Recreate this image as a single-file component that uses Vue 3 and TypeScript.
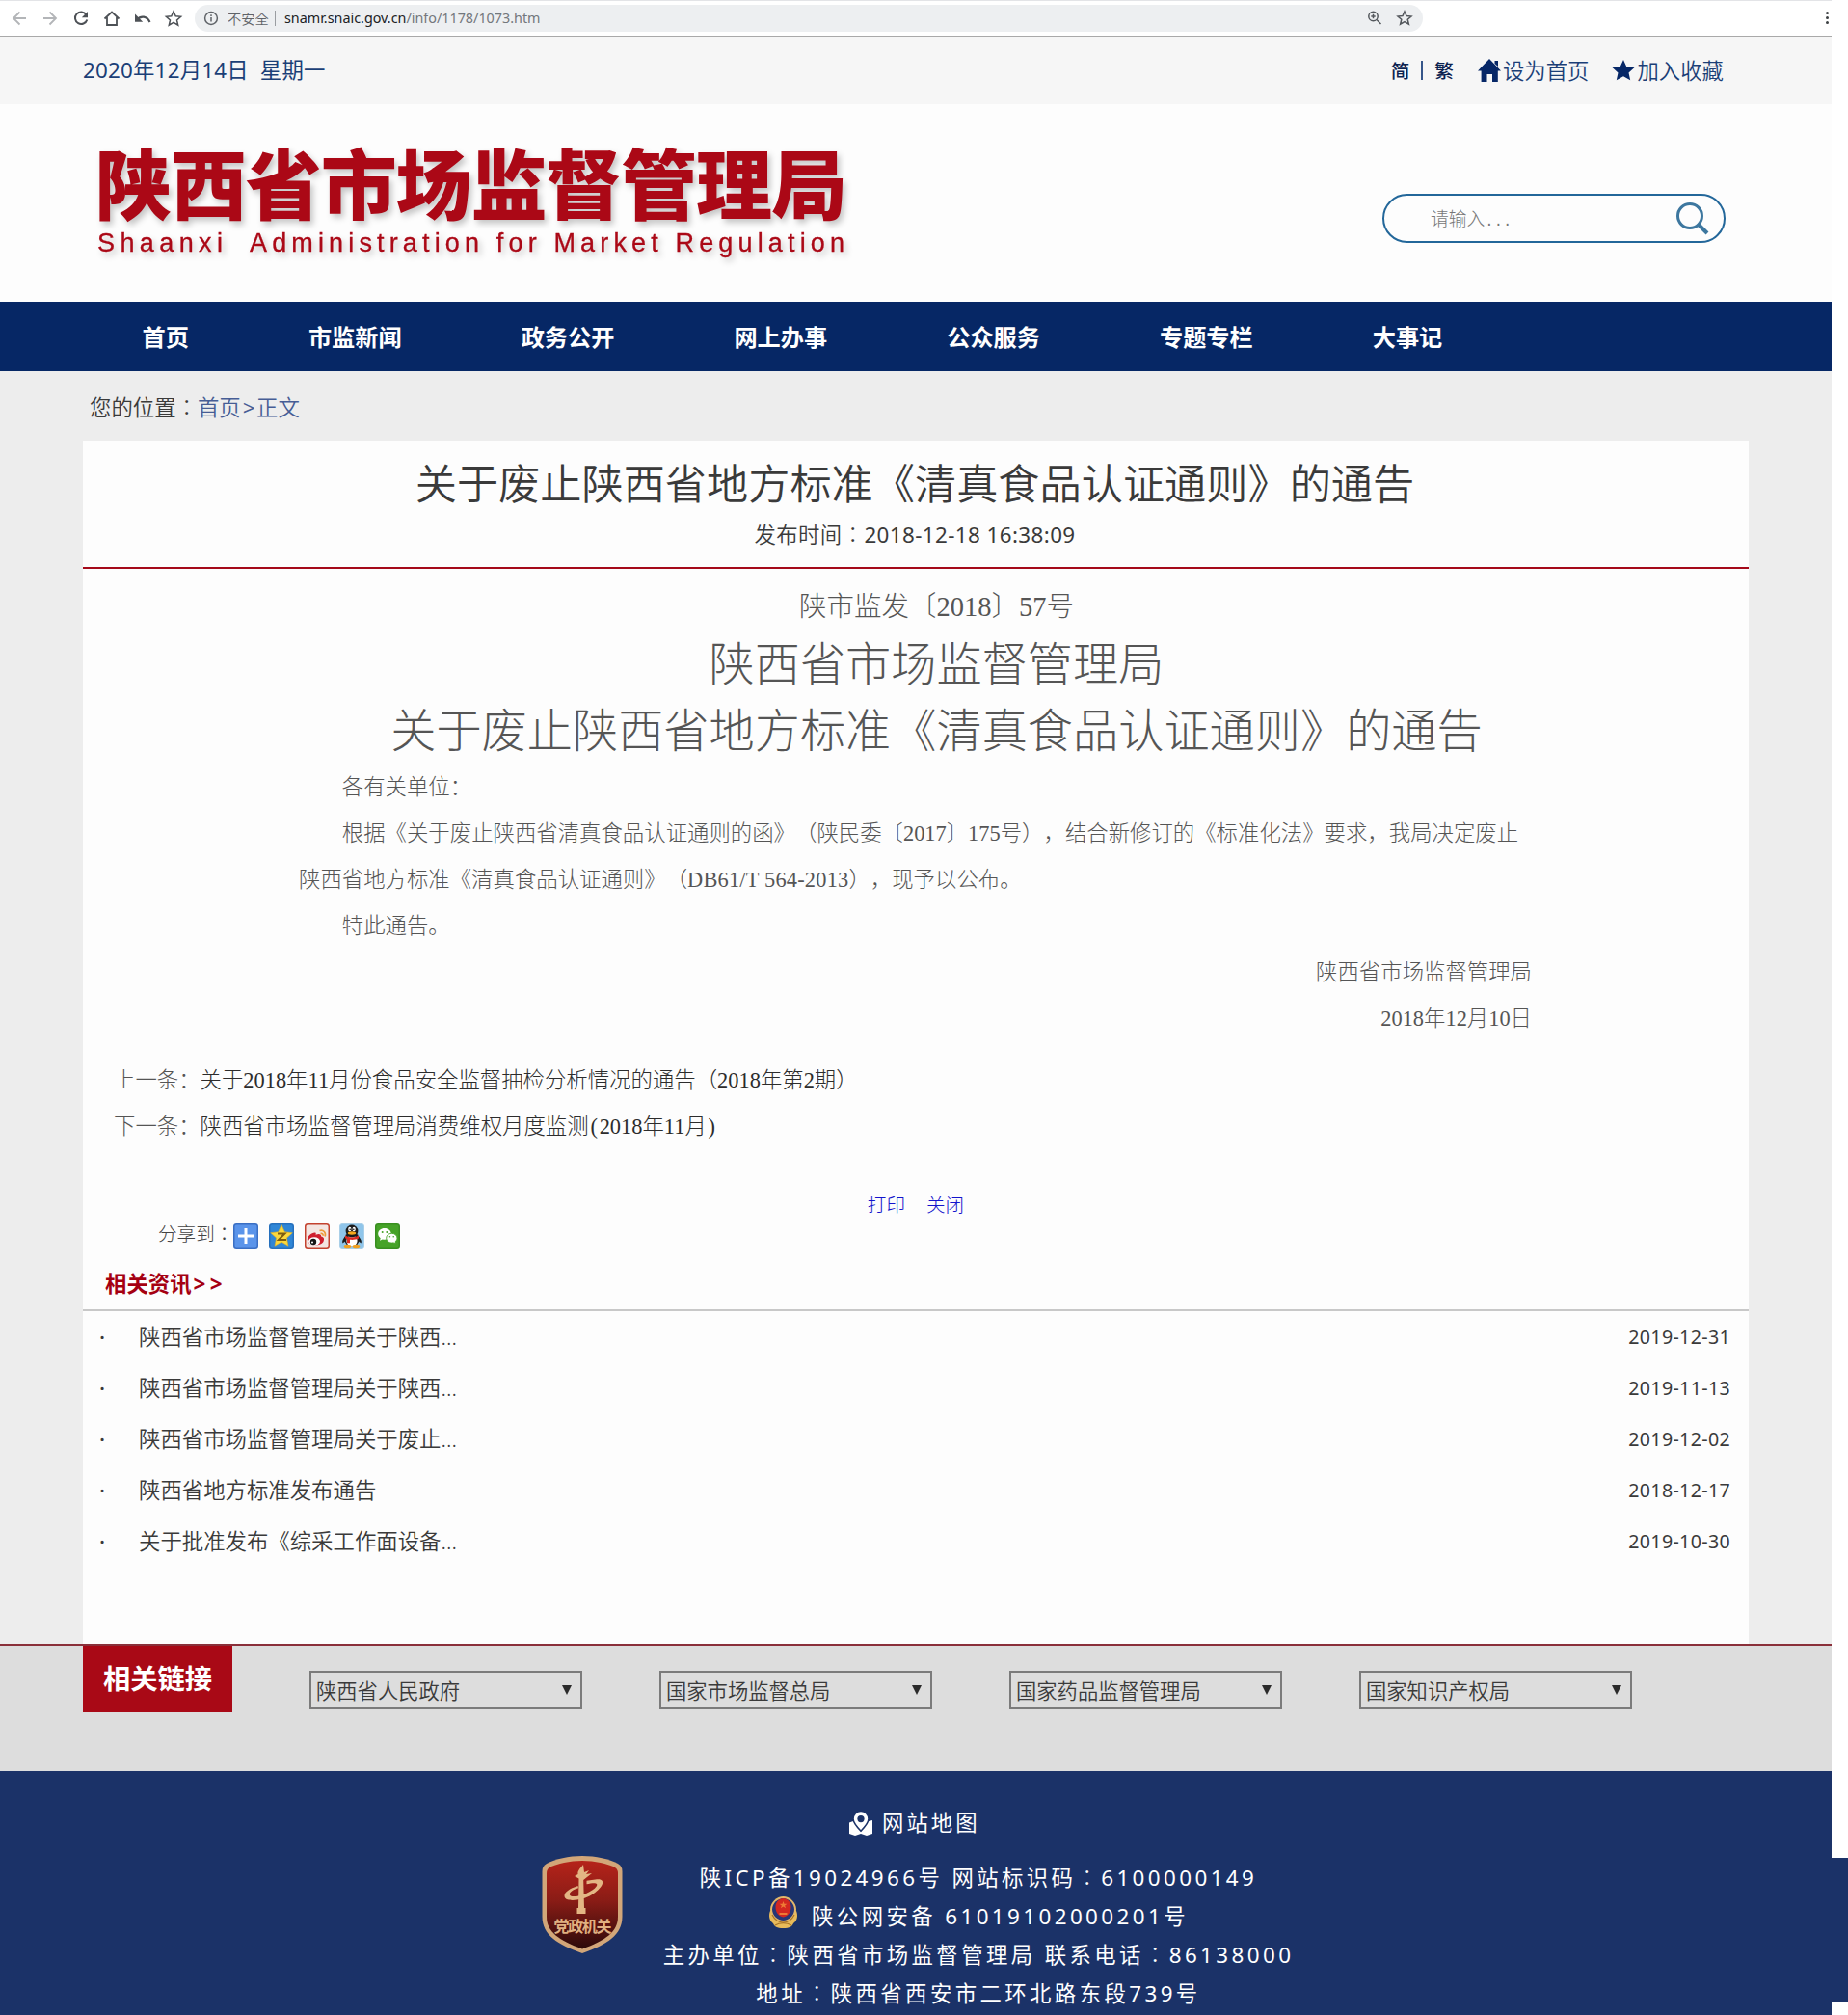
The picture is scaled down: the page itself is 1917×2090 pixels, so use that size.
<script setup lang="ts">
interface RelatedItem {
  title: string
  date: string
}

const navItems: string[] = ['首页', '市监新闻', '政务公开', '网上办事', '公众服务', '专题专栏', '大事记']

const related: RelatedItem[] = [
  { title: '陕西省市场监督管理局关于陕西...', date: '2019-12-31' },
  { title: '陕西省市场监督管理局关于陕西...', date: '2019-11-13' },
  { title: '陕西省市场监督管理局关于废止...', date: '2019-12-02' },
  { title: '陕西省地方标准发布通告', date: '2018-12-17' },
  { title: '关于批准发布《综采工作面设备...', date: '2019-10-30' },
]

const selects: string[] = ['陕西省人民政府', '国家市场监督总局', '国家药品监督管理局', '国家知识产权局']
</script>

<template>
  <div class="screen">
    <div class="chrome">
      <svg class="tools" width="200" height="36" viewBox="0 0 200 36" fill="none" stroke-width="1.8">
        <g stroke="#b3b5b8">
          <path d="M27 19H14.500M20.500 12.500L14 19l6.500 6.500" />
          <path d="M45 19h12.500M51.500 12.500L58 19l-6.500 6.500" />
        </g>
        <g stroke="#4d5156">
          <path d="M89.500 15.200A6.300 6.300 0 1 0 90.300 20.500" stroke-width="2" />
          <path d="M91 12v6.200h-6.200z" fill="#4d5156" stroke="none" />
          <path d="M108.500 19.500L116 12.500l7.500 7M111 18v8h10v-8" />
          <path d="M142 20.500c4-4.500 10.500-4 13.500 2.500" stroke-width="2.200" />
          <path d="M140 14.500v8.200h8.200z" fill="#4d5156" stroke="none" />
          <path d="M180 11.800l2.200 5 5.400.5-4.100 3.600 1.200 5.300-4.700-2.800-4.700 2.800 1.200-5.300-4.100-3.600 5.400-.5z" stroke-width="1.500" />
        </g>
      </svg>
      <div class="omnibox">
        <svg class="info-ico" width="16" height="16" viewBox="0 0 16 16" fill="none" stroke="#5f6368" stroke-width="1.500">
          <circle cx="8" cy="8" r="6.400" />
          <path d="M8 7v4.500M8 4.300v1.600" />
        </svg>
        <span class="unsafe">不安全</span>
        <span class="sep"></span>
        <span class="url">snamr.snaic.gov.cn<em>/info/1178/1073.htm</em></span>
        <svg class="omni-right" width="54" height="20" viewBox="0 0 54 20" fill="none" stroke="#54585d" stroke-width="1.500">
          <circle cx="8.500" cy="8" r="4.700" />
          <path d="M12 11.500l4.500 4.500M8.500 5.800v4.400M6.300 8h4.400" />
          <path d="M41 3l2 4.600 5 .4-3.800 3.300 1.200 4.900L41 13.600l-4.400 2.600 1.200-4.900L34 8l5-.4z" />
        </svg>
      </div>
      <div class="dots"><i></i><i></i><i></i></div>
    </div>

    <div class="topbar">
      <span class="date">2020年12月14日&nbsp; 星期一</span>
      <div class="top-links">
        <span class="lang">简</span>
        <span class="bar"></span>
        <span class="lang">繁</span>
        <a class="home-link">
          <svg width="24" height="24" viewBox="0 0 24 24" fill="#062767">
            <path d="M12 0L24 12.500H20.800V24H15V16H9.500V24H3.600V12.500H0z" />
            <path d="M17.500 2h3.500v6l-3.500-3z" />
          </svg>
          <span>设为首页</span>
        </a>
        <a class="fav-link">
          <svg width="24" height="24" viewBox="0 0 24 24" fill="#062767">
            <path d="M12 1l3.300 7.200 8.200.8-6 5.400 1.700 7.800L12 18.300l-7.200 3.900 1.700-7.800-6-5.400 8.200-.8z" />
          </svg>
          <span>加入收藏</span>
        </a>
      </div>
    </div>

    <header class="masthead">
      <svg class="logo" width="800" height="140" viewBox="0 0 800 140">
        <text class="logo-cn" x="13" y="87" textLength="780" lengthAdjust="spacing">陕西省市场监督管理局</text>
        <text class="logo-en" x="15" y="126" textLength="130" lengthAdjust="spacing">Shaanxi</text>
        <text class="logo-en" x="173" y="126" textLength="617" lengthAdjust="spacing">Administration for Market Regulation</text>
      </svg>
      <div class="search">
        <span>请输入<b>...</b></span>
        <svg width="38" height="38" viewBox="0 0 38 38" fill="none" stroke="#3d779f">
          <circle cx="17" cy="16" r="12.500" stroke-width="3" />
          <path d="M26 25l9 9" stroke-width="4" />
        </svg>
      </div>
    </header>

    <nav class="nav">
      <a v-for="item in navItems" :key="item">{{ item }}</a>
    </nav>

    <main class="main">
      <div class="crumb">您的位置<span class="colon">：</span><a>首页<i>&gt;</i>正文</a></div>
      <section class="panel">
        <h1>关于废止陕西省地方标准《清真食品认证通则》的通告</h1>
        <p class="pub">发布时间<span class="colon">：</span><time>2018-12-18 16:38:09</time></p>
        <article class="article">
          <p class="doc-no">陕市监发〔2018〕57号</p>
          <p class="doc-title first">陕西省市场监督管理局</p>
          <p class="doc-title second">关于废止陕西省地方标准《清真食品认证通则》的通告</p>
          <p class="indent">各有关单位：</p>
          <p class="indent">根据《关于废止陕西省清真食品认证通则的函》（陕民委〔2017〕175号），结合新修订的《标准化法》要求，我局决定废止</p>
          <p>陕西省地方标准《清真食品认证通则》（<span class="code">DB61/T 564-2013</span>），现予以公布。</p>
          <p class="indent">特此通告。</p>
          <p class="sign">陕西省市场监督管理局</p>
          <p class="sign">2018年12月10日</p>
        </article>
        <div class="siblings">
          <p>上一条：<a>关于2018年11月份食品安全监督抽检分析情况的通告（2018年第2期）</a></p>
          <p>下一条：<a>陕西省市场监督管理局消费维权月度监测<i>(</i>2018年11月<i>)</i></a></p>
        </div>
        <div class="actions"><a>打印</a><a>关闭</a></div>
        <div class="share">
          <span class="share-label">分享到<span class="colon">：</span></span>
          <svg width="26" height="26" viewBox="0 0 26 26">
            <rect x=".75" y=".75" width="24.500" height="24.500" rx="2.500" fill="#5a94ea" stroke="#3a6fc4" stroke-width="1.500" />
            <path d="M13 5v16M5 13h16" stroke="#fff" stroke-width="3" />
          </svg>
          <svg width="26" height="26" viewBox="0 0 26 26">
            <rect x=".75" y=".75" width="24.500" height="24.500" rx="2.500" fill="#2f86d6" stroke="#2670bd" stroke-width="1.500" />
            <path d="M13 1.500l3.300 7.300 8 .9-5.900 5.400 1.600 8.100-7-4-7 4 1.600-8.100L1.700 9.700l8-.9z" fill="#fbd83c" stroke="#e3ae22" stroke-width=".6" />
            <path d="M9 10.500h7.500L10 17h8" fill="none" stroke="#7c5c10" stroke-width="2" />
          </svg>
          <svg width="26" height="26" viewBox="0 0 26 26">
            <rect x=".75" y=".75" width="24.500" height="24.500" rx="2.500" fill="#f3e6e2" stroke="#c3422f" stroke-width="1.500" />
            <path d="M3 18c-1-5 5-9 8-8.500 1 .3.800 1.500.5 2.200 3-1.400 6-1 5.600 1.800 3 .8 3.500 2.500 2.500 5-2 5-15 6-16.600-.5z" fill="#cf1f2e" />
            <ellipse cx="10" cy="18.500" rx="6" ry="4.300" fill="#fff" />
            <circle cx="9" cy="19" r="3.200" fill="#161616" />
            <circle cx="8" cy="19.500" r="1" fill="#fff" />
            <path d="M15.500 7.500c4-1.300 7 2 5.600 6M16.500 10.500c1.800-.5 3 .7 2.500 2.300" fill="none" stroke="#ee9a3a" stroke-width="1.700" />
          </svg>
          <svg width="26" height="26" viewBox="0 0 26 26">
            <rect x=".5" y=".5" width="25" height="25" rx="2.500" fill="#8fc5ea" stroke="#a9cfe8" />
            <path d="M6.500 13C3.500 16 2.500 19 3.500 20.500L6.500 18zM19.500 13c3 3 4 6 3 7.500L19.500 18z" fill="#1c1c1c" />
            <ellipse cx="13" cy="16.500" rx="7.800" ry="7.300" fill="#1c1c1c" />
            <ellipse cx="13" cy="18" rx="5.600" ry="5.700" fill="#fff" />
            <ellipse cx="13" cy="8" rx="6.400" ry="6.400" fill="#1c1c1c" />
            <ellipse cx="10.800" cy="6" rx="1.600" ry="2.200" fill="#fff" />
            <ellipse cx="15.200" cy="6" rx="1.600" ry="2.200" fill="#fff" />
            <circle cx="11.200" cy="6.300" r=".8" fill="#111" />
            <circle cx="14.800" cy="6.300" r=".8" fill="#111" />
            <ellipse cx="13" cy="10" rx="4.200" ry="1.700" fill="#f5a81c" />
            <path d="M6 12.500c4 2.500 10 2.500 14 0v3c-3 1.300-6 1.600-9 1.300v3.400H8v-4l-2-.9z" fill="#dc2a22" />
            <ellipse cx="8.500" cy="23.500" rx="3.800" ry="1.800" fill="#f0a020" />
            <ellipse cx="17.500" cy="23.500" rx="3.800" ry="1.800" fill="#f0a020" />
          </svg>
          <svg width="26" height="26" viewBox="0 0 26 26">
            <rect x=".75" y=".75" width="24.500" height="24.500" rx="2.500" fill="#46a328" stroke="#398f20" stroke-width="1.500" />
            <path d="M10 5c-4 0-6.800 2.600-6.800 5.800 0 1.900 1 3.400 2.500 4.500L5 17.800l2.800-1.400c.8.200 1.500.3 2.300.3 3.700 0 6.700-2.600 6.700-5.900C16.800 7.600 13.800 5 10 5z" fill="#fff" />
            <path d="M17.300 10.300c3.300 0 5.700 2.200 5.700 4.900 0 1.500-.8 2.800-2 3.700l.6 2.200-2.400-1.200c-.6.100-1.200.2-1.900.2-3.200 0-5.600-2.200-5.600-4.900s2.400-4.900 5.600-4.900z" fill="#fff" stroke="#46a328" stroke-width=".9" />
            <g fill="#46a328">
              <circle cx="7.700" cy="9" r="1" />
              <circle cx="12.300" cy="9" r="1" />
              <circle cx="15.400" cy="13.800" r=".8" />
              <circle cx="19.200" cy="13.800" r=".8" />
            </g>
          </svg>
        </div>
        <h2>相关资讯<i>&gt;&gt;</i></h2>
        <ul class="related">
          <li v-for="item in related" :key="item.date">
            <span class="dot">·</span>
            <a>{{ item.title }}</a>
            <time>{{ item.date }}</time>
          </li>
        </ul>
      </section>
    </main>

    <section class="links">
      <div class="links-title">相关链接</div>
      <div v-for="name in selects" :key="name" class="select">
        <span>{{ name }}</span>
        <svg width="10" height="10" viewBox="0 0 10 10"><path d="M0 0h10L5 10z" fill="#2b2b2b" /></svg>
      </div>
    </section>

    <div class="foot-wrap">
      <footer class="footer">
        <div class="sitemap">
          <svg width="24" height="25" viewBox="0 0 24 25">
            <path d="M0 11.500l4-1.500 8 10.500L20 10l4-1v14l-6 2-6-2-6 2-6-2z" fill="#fff" />
            <path d="M12 -.5a8 8 0 0 1 8 8c0 4-5 9.600-8 12.700C9 17.100 4 11.500 4 7.500a8 8 0 0 1 8-8z" fill="#fff" stroke="#1b3268" stroke-width="1.600" />
            <circle cx="12" cy="7.600" r="3.600" fill="#1b3268" />
          </svg>
          <span>网站地图</span>
        </div>
        <div class="foot-row">
          <svg class="badge" width="84" height="101" viewBox="0 0 84 101">
            <defs>
              <linearGradient id="shield" x1="0" y1="0" x2="0" y2="1">
                <stop offset="0" stop-color="#b5231a" />
                <stop offset=".45" stop-color="#8a1c16" />
                <stop offset="1" stop-color="#2c0a0a" />
              </linearGradient>
            </defs>
            <path d="M42 0c14 0 28 3 37 8 3 2 4.500 4 4.500 8v47c0 19-16 29-41.500 38C16.500 92 .5 82 .5 63V16c0-4 1.500-6 4.500-8C14 3 28 0 42 0z" fill="#d2a679" />
            <path d="M42 5c13 0 26 3 34 7 2 1.500 3 3 3 6v45c0 16-13 24.500-37 33.500C18 87.500 5 79 5 63V18c0-3 1-4.500 3-6 8-4 21-7 34-7z" fill="url(#shield)" />
            <g fill="#e3b684">
              <path d="M43 9c-3 4-6 6-5.500 10l-3.500 2 4.500 2.500L38 54h-1.500v6h9v-6H44l-.8-29 8.800-7-6 1 3-4-5 2z" />
              <path d="M37.500 31c-9 3-14 6.500-14 10.500 0 7 18 5 28-1 12-7 17-18 4-16l-9 1.200v3.500c7-1.500 13-2 10 2.500-4 6-21 12-26 10-4-2-.5-6 7.500-8.500z" />
            </g>
            <text class="badge-text" x="12.500" y="79" textLength="60">党政机关</text>
          </svg>
          <div class="foot-lines">
            <p>陕ICP备19024966号 网站标识码<span class="colon">：</span>6100000149</p>
            <p class="police">
              <svg width="31" height="33" viewBox="0 0 31 33">
                <path d="M2 15h27c2 5 1 10-3 13-1 3-4 5-10.500 5S6 31 5 28c-4-3-5-8-3-13z" fill="#e8bb5a" />
                <path d="M15.500 0C22 0 29 6 29 13.500S23 28 15.500 28 2 21 2 13.500 9 0 15.500 0z" fill="#e4b869" />
                <path d="M15.500 2C21 2 27 7 27 13.500 27 20 21 25 15.500 25S4 20 4 13.500C4 7 10 2 15.500 2z" fill="#283675" />
                <path d="M15.500 2c4 0 8 3.500 8 9s-3 9.500-8 10.500c-5-1-8-5-8-10.500s4-9 8-9z" fill="#d32720" />
                <path d="M15.500 5l1 2.700h3l-2.400 1.800 1 2.800-2.600-1.700-2.600 1.700 1-2.800-2.400-1.800h3zM11.500 17h8v2h-8z" fill="#ee7a35" />
                <path d="M4 19c3 6 8 8 11.500 8S24 25 27 19M7 30c5-3 12-3 17 0" fill="none" stroke="#a87526" stroke-width="1.200" />
              </svg>
              <span>陕公网安备 61019102000201号</span>
            </p>
            <p>主办单位<span class="colon">：</span>陕西省市场监督管理局 联系电话<span class="colon">：</span>86138000</p>
            <p>地址<span class="colon">：</span>陕西省西安市二环北路东段739号</p>
          </div>
        </div>
      </footer>
      <div class="foot-edge"></div>
    </div>
  </div>
</template>

<style>
html,
body {
  margin: 0;
  background: #fff;
}
</style>

<style scoped>
.screen {
  width: 1917px;
  height: 2090px;
  overflow: hidden;
  background: #fff;
  font-family: 'Noto Sans', 'Noto Sans CJK SC', sans-serif;
  font-size: 22.4px;
  font-weight: 350;
  color: #3a3a3a;
  white-space: nowrap;
  text-spacing-trim: space-all;
}
p,
h1,
h2,
ul {
  margin: 0;
  padding: 0;
}
/* The traditional face centres the full-width colon in its cell. */
.colon {
  font-family: 'Noto Sans CJK TC', sans-serif;
  font-weight: 300;
  line-height: 1px;
}
.chrome,
.topbar,
.masthead,
.nav,
.main,
.links {
  width: 1900px;
  box-sizing: border-box;
}

.chrome {
  height: 38px;
  display: flex;
  align-items: flex-start;
  border-top: 1px solid #e3e4e7;
  border-bottom: 1px solid #a9a9a9;
  background: #fff;
}
.tools {
  margin-top: -1px;
  flex: none;
}
.omnibox {
  margin: 4px 0 0 2px;
  width: 1274px;
  height: 28px;
  box-sizing: border-box;
  border-radius: 14px;
  background: #edeff1;
  display: flex;
  align-items: center;
  padding-left: 9px;
}
.info-ico {
  flex: none;
}
.unsafe {
  font-size: 14.2px;
  color: #5f6368;
  margin: -1px 0 0 9px;
  width: 43px;
}
.sep {
  width: 1px;
  height: 16px;
  background: #9a9da1;
  margin: 0 9px 0 6px;
}
.url {
  font-size: 14.350px;
  font-weight: 400;
  color: #202124;
  margin-top: -1px;
}
.url em {
  font-style: normal;
  color: #73777c;
}
.omni-right {
  margin-left: auto;
  margin-right: 6px;
}
.dots {
  margin: 11px 3px 0 auto;
  display: flex;
  flex-direction: column;
  gap: 2px;
}
.dots i {
  width: 3px;
  height: 3px;
  border-radius: 50%;
  background: #3c4043;
}

.topbar {
  height: 70px;
  background: #f6f6f6;
  display: flex;
  justify-content: space-between;
  align-items: center;
  padding: 0 110px 0 86px;
  color: #1b3f77;
}
.date {
  font-weight: 400;
  letter-spacing: 0.200px;
  margin-top: -3px;
}
.top-links {
  display: flex;
  align-items: center;
}
.lang {
  font-family: 'Noto Sans CJK SC', sans-serif;
  font-size: 19.6px;
  font-weight: 500;
  line-height: 28px;
  margin-top: -1px;
  color: #0b2250;
}
.bar {
  width: 2px;
  height: 20px;
  background: #36568a;
  margin: 0 12px;
}
.home-link,
.fav-link {
  display: flex;
  align-items: center;
}
.home-link {
  margin: 0 24px 0 25px;
}
.home-link span,
.fav-link span {
  margin: -2px 0 0 2px;
}
.fav-link span {
  margin-right: 2px;
}

.masthead {
  height: 205px;
  background: #fdfdfd;
  display: flex;
  justify-content: space-between;
  padding: 27px 110px 0 86px;
}
.logo {
  overflow: visible;
  fill: #ab0816;
  filter: drop-shadow(3px 4px 3px rgba(0, 0, 0, 0.22));
}
.logo-cn {
  font: 900 79px 'Noto Sans CJK SC', sans-serif;
}
.logo-en {
  font: 27px 'Liberation Sans', sans-serif;
  stroke: #ab0816;
  stroke-width: 0.3px;
}
.search {
  margin-top: 66px;
  width: 356px;
  height: 51px;
  box-sizing: border-box;
  border: 2px solid #23679a;
  border-radius: 26px;
  display: flex;
  align-items: center;
  justify-content: space-between;
  padding: 0 14px 0 48px;
  font-size: 18.800px;
  font-weight: 300;
  color: #777;
}
.search span {
  margin-top: -2px;
}
.search b {
  font-family: 'Liberation Mono', monospace;
  font-size: 15.500px;
  font-weight: 400;
}

.nav {
  height: 72px;
  background: #062765;
  display: flex;
  align-items: center;
  gap: 124px;
  padding-left: 147.500px;
  font-size: 24.200px;
  font-weight: 700;
  color: #fff;
}
.nav a {
  line-height: 72px;
  margin-top: 2px;
}

.main {
  height: 1320px;
  background: #ededed;
  padding: 0 86px;
}
.crumb {
  height: 72px;
  line-height: 75px;
  padding-left: 7px;
}
.crumb a {
  color: #465d95;
}
.crumb i {
  font-style: normal;
  font-weight: 400;
  letter-spacing: 1.500px;
  margin-left: 2px;
}
.panel {
  height: 1248px;
  background: #fdfdfd;
  box-sizing: border-box;
}
.panel h1 {
  font-size: 43.200px;
  font-weight: 350;
  line-height: 60px;
  padding-top: 15px;
  text-align: center;
  text-indent: -2px;
}
.pub {
  text-align: center;
  line-height: 32px;
  letter-spacing: 0.400px;
  padding: 7px 2px 17px 0;
  border-bottom: 2px solid #a50a1a;
}
.pub time {
  font-weight: 400;
}
.article {
  font-family: 'Liberation Serif', 'Noto Sans CJK SC', serif;
  font-weight: 300;
  width: 1279px;
  margin-left: 224px;
  padding-top: 15px;
  color: #555;
}
.article p {
  line-height: 48px;
}
.article .doc-no {
  font-size: 28.500px;
  line-height: 49px;
  text-align: center;
  text-indent: 44px;
}
.article .doc-title {
  font-size: 47.200px;
  line-height: 69px;
  text-align: center;
  text-indent: 44px;
}
.article .first {
  padding-top: 2px;
}
.article .second {
  line-height: 68px;
}
.article .indent {
  text-indent: 2em;
}
.article .sign {
  text-align: right;
}
.code {
  letter-spacing: 0.200px;
}
.siblings {
  font-family: 'Liberation Serif', 'Noto Sans CJK SC', serif;
  font-weight: 300;
  padding: 16px 0 0 32px;
  color: #555;
}
.siblings p {
  line-height: 48px;
}
.siblings a {
  color: #2c2c2c;
}
.siblings i {
  font-style: normal;
  padding: 0 1.800px;
}
.actions {
  margin-top: 43px;
  display: flex;
  justify-content: center;
  gap: 22px;
  font-size: 19.600px;
  line-height: 28px;
  font-weight: 300;
}
.actions a {
  color: #1414cc;
}
.share {
  height: 26px;
  margin-top: 5px;
  padding-left: 78px;
  display: flex;
  gap: 10.800px;
  font-size: 19.600px;
  font-weight: 300;
  color: #444;
}
.share-label {
  line-height: 21px;
  width: 78px;
  margin-right: -10.800px;
}
.panel h2 {
  margin-top: 20px;
  height: 43px;
  line-height: 34px;
  padding-left: 23px;
  font-size: 22.400px;
  font-weight: 700;
  color: #a50012;
  border-bottom: 2px solid #c8c8c8;
}
.panel h2 i {
  font-style: normal;
  letter-spacing: 4.500px;
  margin-left: 2px;
}
.related {
  list-style: none;
}
.related li {
  height: 53px;
  line-height: 54px;
  display: flex;
  padding: 0 19px 0 17px;
}
.dot {
  width: 41px;
  font-weight: 500;
}
.related time {
  margin-left: auto;
  line-height: 53px;
  font-size: 19.600px;
  font-weight: 400;
  letter-spacing: 0.350px;
}

.links {
  height: 132px;
  background: #ddd;
  border-top: 2px solid #8a303a;
  padding-left: 86px;
  display: flex;
  align-items: flex-start;
}
.links-title {
  width: 155px;
  height: 69px;
  line-height: 69px;
  background: #a90916;
  color: #fff;
  font-size: 28.300px;
  font-weight: 700;
  text-align: center;
}
.select {
  margin: 26px 0 0 80px;
  width: 283px;
  height: 40px;
  box-sizing: border-box;
  border: 2px solid #7b7b7b;
  display: flex;
  align-items: center;
  justify-content: space-between;
  padding: 0 9px 0 5px;
  font-size: 21.300px;
  line-height: 40px;
}
.select span {
  margin-top: 2px;
}
.select svg {
  margin-bottom: 1px;
}

.foot-wrap {
  display: flex;
  align-items: flex-start;
}
.footer {
  width: 1900px;
  height: 253px;
  background: #1b3268;
  color: #fff;
  font-weight: 400;
  letter-spacing: 3px;
}
.foot-edge {
  margin-top: 90px;
  width: 17px;
  height: 150px;
  background: #1b3268;
}
.sitemap {
  display: flex;
  align-items: center;
  height: 54px;
  padding: 27px 0 0 881px;
}
.sitemap svg {
  margin-top: 1px;
}
.sitemap span {
  margin: -4px 0 0 10px;
}
.footer p {
  line-height: 40px;
  text-align: center;
  letter-spacing: 3.400px;
}
.foot-row {
  display: flex;
  align-items: flex-start;
  margin-top: 7px;
  padding-left: 562px;
}
.foot-lines {
  width: 660px;
  margin: 3px 0 0 39px;
}
.badge-text {
  font: 700 16px 'Noto Sans CJK SC', sans-serif;
  fill: #e0b081;
  letter-spacing: 0;
}
.police {
  display: flex;
  justify-content: center;
}
.police svg {
  margin: -1px 14px 0 0;
}
</style>
